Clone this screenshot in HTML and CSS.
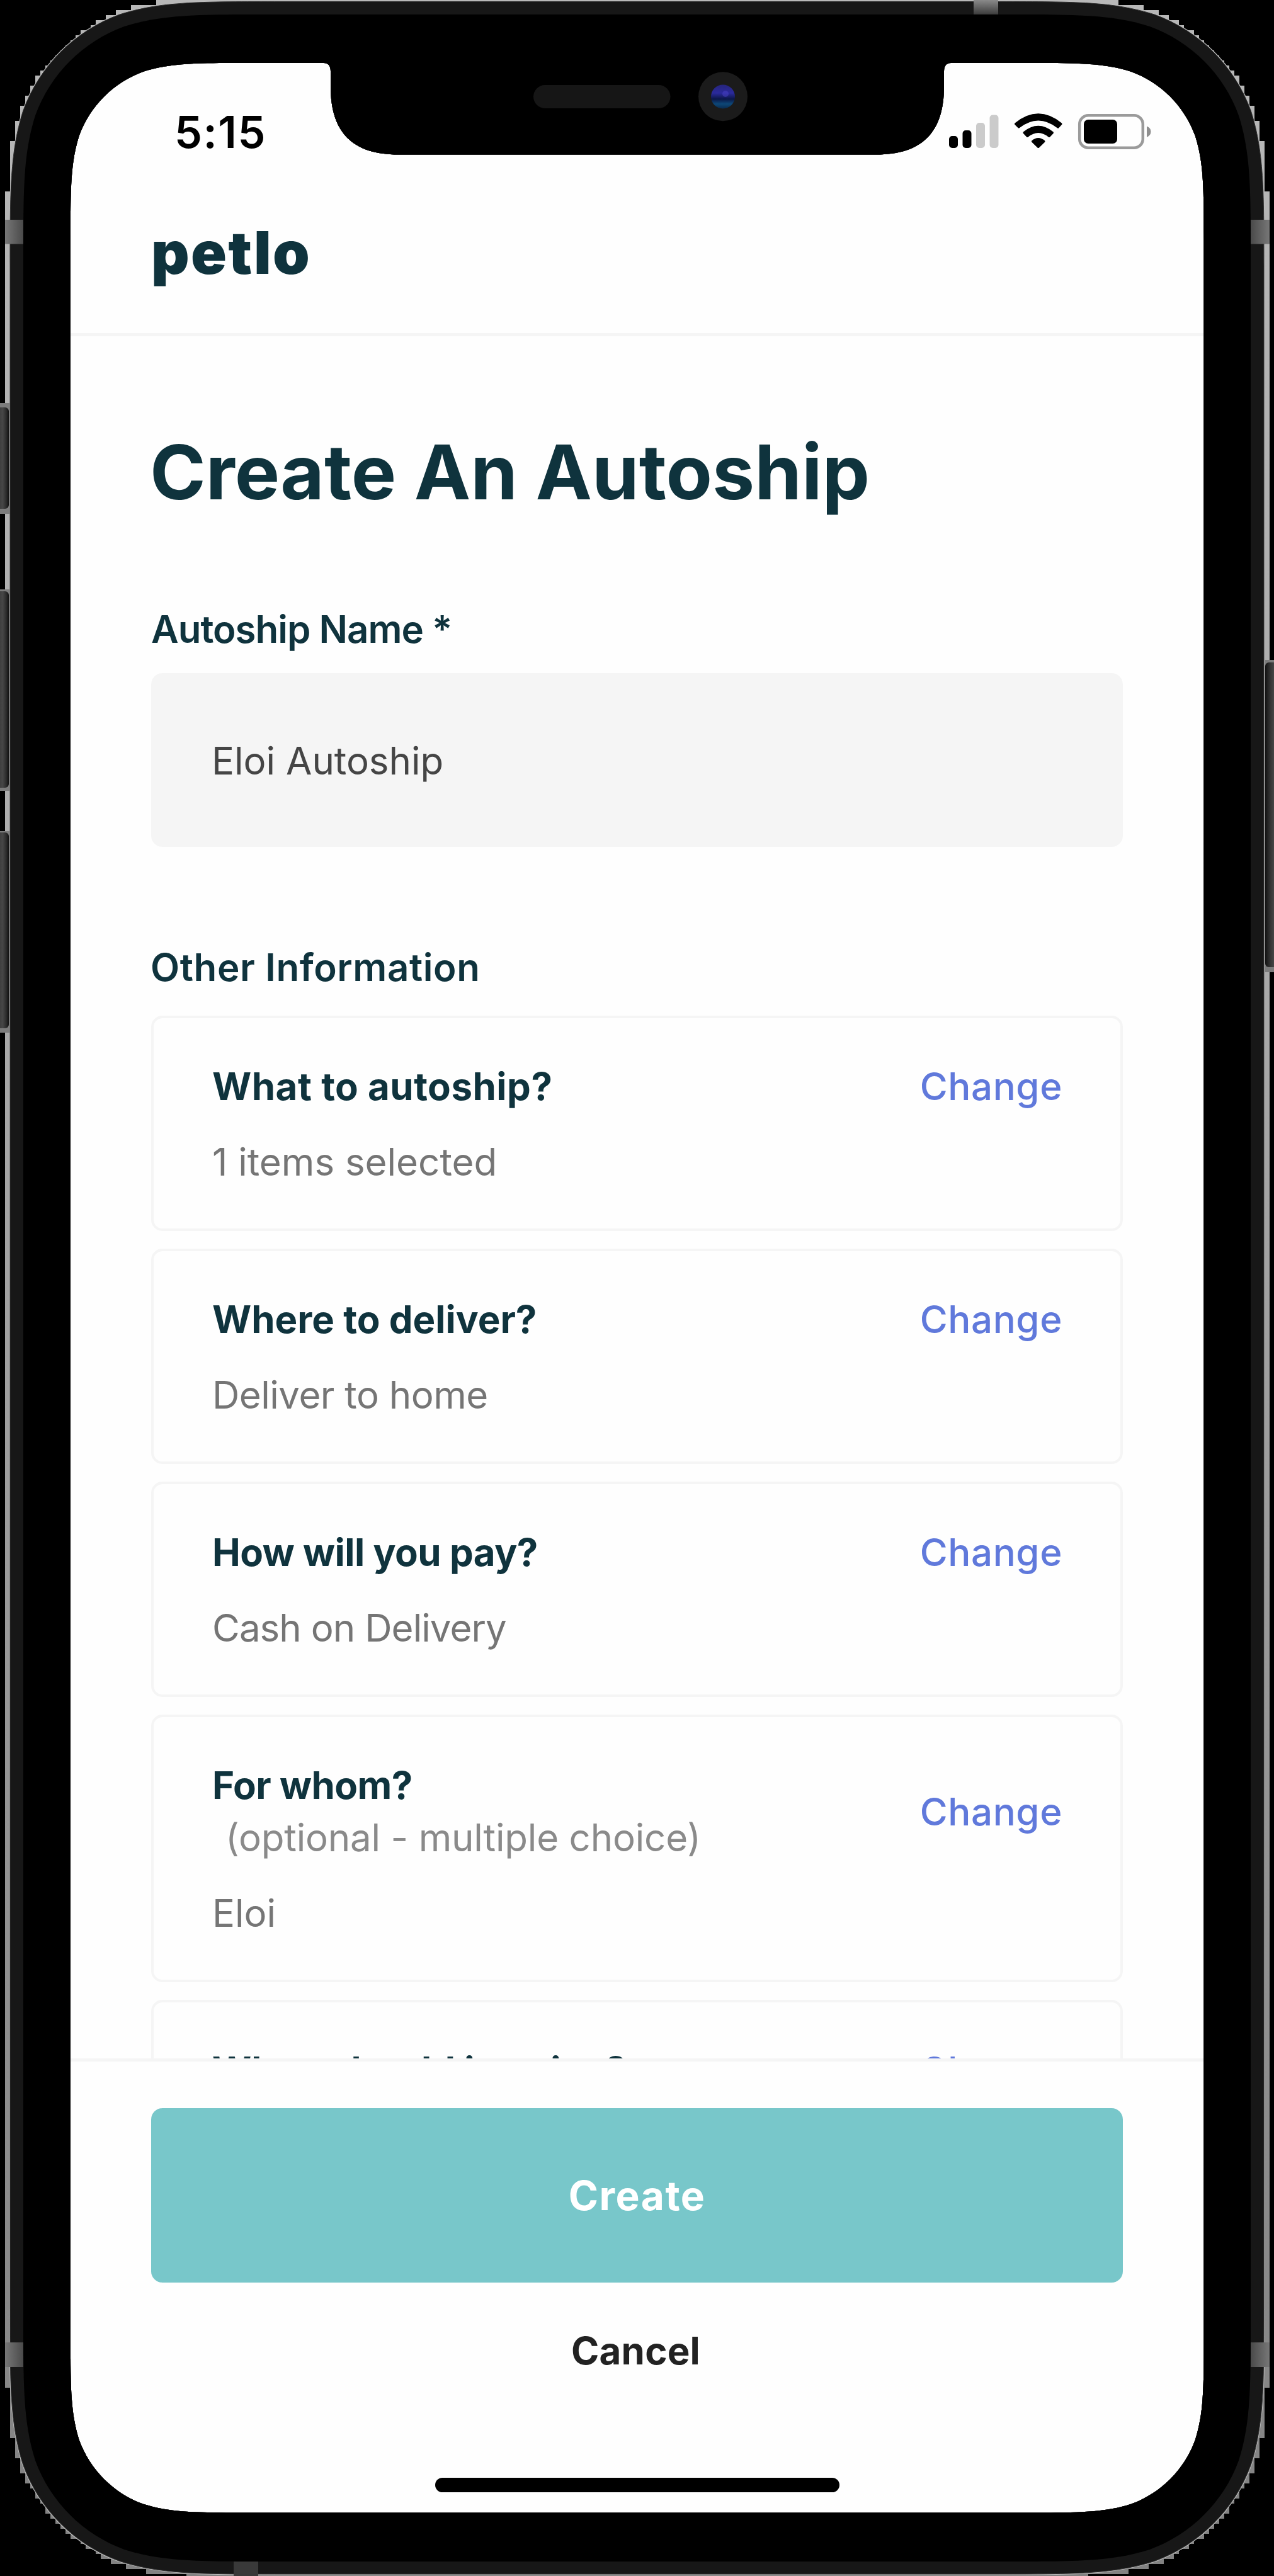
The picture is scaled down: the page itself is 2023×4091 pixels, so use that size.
FILE: index.html
```html
<!DOCTYPE html>
<html lang="en">
<head>
<meta charset="utf-8">
<title>Create An Autoship</title>
<link rel="stylesheet" href="styles.css">
</head>
<body>
<div class="phone">
  <div class="screen">
    <header class="header">
      <div class="status">
        <span class="time">5:15</span>
        <svg class="status-icons" width="322" height="58" viewBox="0 0 322 58">
          <rect x="0" y="36" width="14" height="19" rx="5"/>
          <rect x="21.5" y="27" width="14" height="28" rx="5"/>
          <g fill="#cbcbcb">
            <rect x="43" y="15" width="14" height="40" rx="5"/>
            <rect x="64.5" y="2.500" width="14" height="52.500" rx="5"/>
          </g>
          <path d="M104.500 15.500Q141.700-15 179 15.500Q180 17 179 18L174 23.500Q172.500 24 171.500 23Q141.700 0 112 23Q110.500 24 109.500 23L104.500 18Q103.500 16.500 104.500 15.500Z"/>
          <path d="M117.800 29.500Q141.700 10 165.600 29.500Q166.500 31 165.500 32L160.300 37.500Q159 38.500 157.700 37.500Q141.700 24.500 125.700 37.500Q124.400 38.500 123.200 37.500L118 32Q117 31 117.800 29.500Z"/>
          <path d="M131.200 43.500Q141.700 34.500 152.200 43.500Q153 44.800 152 45.800L143 54.500Q141.700 55.500 140.400 54.500L131.400 45.800Q130.400 44.800 131.200 43.500Z"/>
          <rect x="207.200" y="3.200" width="100.600" height="51.600" rx="14" fill="none" stroke="#9b9b9b" stroke-width="4.500"/>
          <rect x="214" y="10" width="53" height="38" rx="7"/>
          <path d="M314 20.500Q320.500 23 320.500 29T314 38Z" fill="#8f8f8f"/>
        </svg>
      </div>
      <div class="brand">petlo</div>
    </header>

    <main class="content">
      <h1 class="title">Create An Autoship</h1>
      <label class="label label-name" for="name">Autoship Name *</label>
      <input class="input" id="name" type="text" value="Eloi Autoship">
      <h2 class="label label-info">Other Information</h2>
      <div class="cards">
        <section class="card">
          <div class="card-head"><h3 class="question">What to autoship?</h3><a class="change">Change</a></div>
          <p class="answer">1 items selected</p>
        </section>
        <section class="card">
          <div class="card-head"><h3 class="question question-plain">Where to deliver?</h3><a class="change">Change</a></div>
          <p class="answer answer-snug">Deliver to home</p>
        </section>
        <section class="card">
          <div class="card-head"><h3 class="question question-tight">How will you pay?</h3><a class="change">Change</a></div>
          <p class="answer answer-tight">Cash on Delivery</p>
        </section>
        <section class="card">
          <div class="card-head">
            <h3 class="question question-tight">For whom?<span class="hint">(optional - multiple choice)</span></h3>
            <a class="change">Change</a>
          </div>
          <p class="answer">Eloi</p>
        </section>
        <section class="card">
          <div class="card-head"><h3 class="question question-plain">When should it arrive?</h3><a class="change">Change</a></div>
        </section>
      </div>
    </main>

    <footer class="footer">
      <button class="create" type="button">Create</button>
      <button class="cancel" type="button">Cancel</button>
      <div class="home-indicator"></div>
    </footer>
  </div>

  <svg class="frame" width="2023" height="4091" viewBox="0 0 2023 4091" aria-hidden="true">
    <defs>
      <linearGradient id="steel" gradientUnits="userSpaceOnUse" x1="0" y1="0" x2="0" y2="4091">
        <stop offset="0" stop-color="#b8b8b8"/><stop offset=".35" stop-color="#ababab"/><stop offset="1" stop-color="#828282"/>
      </linearGradient>
      <linearGradient id="key-left"><stop offset="0" stop-color="#323232"/><stop offset=".5" stop-color="#474747"/><stop offset=".8" stop-color="#2c2c2c"/><stop offset="1" stop-color="#111"/></linearGradient>
      <linearGradient id="key-right"><stop offset="0" stop-color="#111"/><stop offset=".3" stop-color="#2c2c2c"/><stop offset=".7" stop-color="#474747"/><stop offset="1" stop-color="#323232"/></linearGradient>
      <linearGradient id="band"><stop offset="0" stop-color="#777"/><stop offset="1" stop-color="#4a4a4a"/></linearGradient>
      <linearGradient id="band-right"><stop offset="0" stop-color="#4a4a4a"/><stop offset="1" stop-color="#777"/></linearGradient>
      <linearGradient id="band-top" x2="0" y2="1"><stop offset="0" stop-color="#8a8a8a"/><stop offset="1" stop-color="#3c3c3c"/></linearGradient>
      <linearGradient id="lens" x2="0" y2="1"><stop offset="0" stop-color="#26257c"/><stop offset=".35" stop-color="#2b2a9c"/><stop offset=".6" stop-color="#0b1748"/><stop offset=".8" stop-color="#0d4777"/><stop offset="1" stop-color="#0a2c50"/></linearGradient>
      <!-- everything but the display opening -->
      <clipPath id="bezel">
        <path clip-rule="evenodd" d="M0 0H2023V4091H0Z M391.800 100H514Q525 100 525 114V137.500c0 73 35 108 108 108H1391c73 0 108-35 108-108V114Q1499 100 1510 100H1631.700c80.600 0 120.800 0 164.200 13.700c47.300 17.200 84.600 54.500 101.900 101.900c13.700 43.400 13.700 83.600 13.700 164.200V3710.700c0 80.600 0 120.800-13.700 164.200c-17.200 47.300-54.500 84.600-101.900 101.900c-43.400 13.700-83.600 13.700-164.200 13.700H391.800c-80.600 0-120.800 0-164.200-13.700c-47.300-17.200-84.600-54.500-101.900-101.900c-13.700-43.400-13.700-83.600-13.700-164.200V379.800c0-80.600 0-120.800 13.700-164.200c17.200-47.300 54.500-84.600 101.900-101.900c43.400-13.700 83.600-13.700 164.200-13.700Z"/>
      </clipPath>
      <path id="edge-top" d="M1012 0H248V8H208V16H184V24H168V32H152V40H144V48H128V56H120V64H112V72H104V80H96V88H88V96H80V104H72V112H64V120H56V136H48V152H40V168H32V192H24V224H16V304H8V2046H1012Z"/>
      <path id="edge-bottom" d="M1012 4091H296V4088H232V4080H200V4072H176V4064H160V4056H152V4048H136V4040H128V4032H112V4024H104V4016H96V4008H88V4000H80V3992H72V3976H64V3968H56V3952H48V3944H40V3928H32V3904H24V3872H16V3792H8V2045H1012Z"/>
      <path id="body" d="M436.400 2.500H1586.600c121.100 0 181.600 0 246.700 20.600c71.100 25.900 127.200 81.900 153.100 153.100c20.600 65.100 20.600 125.700 20.600 246.700V3667.600c0 121.100 0 181.600-20.600 246.700c-25.900 71.100-81.900 127.200-153.100 153.100c-65.100 20.600-125.700 20.600-246.700 20.600H436.400c-121.100 0-181.600 0-246.700-20.600c-71.100-25.900-127.200-81.900-153.100-153.100c-20.600-65.100-20.600-125.700-20.600-246.700V422.900c0-121.100 0-181.600 20.600-246.700c25.900-71.100 81.900-127.200 153.100-153.100c65.100-20.600 125.700-20.600 246.700-20.600Z"/>
    </defs>
    <g clip-path="url(#bezel)">
      <rect width="2023" height="4091"/>
      <g fill="url(#steel)">
        <use href="#edge-top"/><use href="#edge-top" transform="matrix(-1 0 0 1 2024 0)"/>
        <use href="#edge-bottom"/><use href="#edge-bottom" transform="matrix(-1 0 0 1 2024 0)"/>
      </g>
      <use href="#body" fill="#171717" stroke="#bcbcbc" stroke-width="3"/>
      <use href="#body" fill="#171717" stroke="#333" stroke-width="1"/>
      <path d="M425.300 23H1597.700c111.800 0 167.700 0 227.900 19c65.700 23.900 117.500 75.700 141.400 141.400c19 60.200 19 116.100 19 227.900V3679.700c0 111.800 0 167.700-19 227.900c-23.900 65.700-75.700 117.500-141.400 141.400c-60.200 19-116.100 19-227.900 19H425.300c-111.800 0-167.700 0-227.900-19c-65.700-23.900-117.500-75.700-141.400-141.400c-19-60.200-19-116.100-19-227.900V411.300c0-111.800 0-167.700 19-227.900c23.900-65.700 75.700-117.500 141.400-141.400c60.200-19 116.100-19 227.900-19Z"/>
      <g fill="url(#band)">
        <rect x="8" y="349" width="29" height="38.500"/><rect x="8" y="3720" width="29" height="39"/>
      </g>
      <g fill="url(#band-right)">
        <rect x="1986" y="349" width="30" height="38.500"/><rect x="1986" y="3720" width="30" height="39"/>
      </g>
      <rect x="1546" y="0" width="39" height="23" fill="url(#band-top)"/>
      <rect x="371" y="4068" width="39" height="23" fill="#393939"/>
      <g fill="#7c7c7c">
        <rect x="0" y="640" width="15" height="176"/><rect x="0" y="936" width="15" height="320"/><rect x="0" y="1320" width="15" height="320"/>
        <rect x="2009" y="1048" width="14" height="496"/>
      </g>
      <g fill="url(#key-left)">
        <rect x="-6" y="647" width="20" height="161" rx="6"/><rect x="-6" y="939" width="20" height="312" rx="6"/><rect x="-6" y="1322" width="20" height="311" rx="6"/>
      </g>
      <rect x="2009" y="1052" width="20" height="484" rx="6" fill="url(#key-right)"/>
      <rect x="847" y="135" width="217.500" height="37" rx="18.500" fill="#161616"/>
      <circle cx="1148" cy="153.300" r="39" fill="#1b1b1b"/>
      <circle cx="1148" cy="153.500" r="19" fill="url(#lens)"/>
      <circle cx="1152" cy="149" r="5" fill="#4a42c8" opacity=".5"/>
    </g>
  </svg>
</div>
</body>
</html>
```
FILE: styles.css
```css
* {
  box-sizing: border-box;
}

body {
  margin: 0;
  background: #000;
  font-family: Inter, "Liberation Sans", sans-serif;
}

h1, h2, h3, p {
  margin: 0;
}

.phone {
  position: relative;
  width: 2023px;
  height: 4091px;
  padding: 100px 111px 100px 112px;
  overflow: hidden;
}

/* the hardware lies over the display */
.frame {
  position: absolute;
  inset: 0;
  pointer-events: none;
}

.screen {
  display: flex;
  flex-direction: column;
  height: 3891px;
  background: #fefefe;
}

.header {
  flex: none;
  height: 434px;
  border-bottom: 5px solid #f5f5f5;
}

.status {
  display: flex;
  justify-content: space-between;
  align-items: flex-start;
  height: 200px;
  padding: 68px 83px 0 165px;
}

.time {
  font-size: 70px;
  font-weight: 600;
  line-height: 84px;
  letter-spacing: 1.5px;
  color: #000;
}

.status-icons {
  margin-top: 12px;
}

.brand {
  padding: 44px 0 0 128px;
  font-size: 94px;
  font-weight: 900;
  line-height: 114px;
  letter-spacing: 2.4px;
  color: #0f333d;
}

.content {
  flex: 1;
  min-height: 0;
  overflow: hidden;
  padding: 143px 129px 0 128px;
}

.title {
  margin-left: -2px;
  font-size: 120px;
  font-weight: 700;
  line-height: 145px;
  color: #0f333d;
}

.label {
  display: block;
  font-size: 60px;
  font-weight: 600;
  line-height: 73px;
  color: #0f333d;
}

.label-name {
  margin-top: 141px;
  letter-spacing: -1px;
}

.label-info {
  margin: 155px 0 0 -1px;
  letter-spacing: 0.6px;
}

.input {
  display: block;
  width: 100%;
  height: 276px;
  margin-top: 33px;
  padding: 2px 96px 0;
  border: 0;
  border-radius: 18px;
  background: #f5f5f5;
  font: 400 60px/73px Inter, "Liberation Sans", sans-serif;
  color: #454545;
}

.cards {
  display: flex;
  flex-direction: column;
  gap: 28px;
  margin-top: 40px;
}

.card {
  padding: 67px 92px 64px 93px;
  border: 4px solid #f5f5f5;
  border-radius: 18px;
}

.card-head {
  display: flex;
  justify-content: space-between;
  align-items: center;
}

.question,
.answer,
.change {
  font-size: 60px;
  line-height: 83px;
}

.question {
  font-weight: 700;
  letter-spacing: 0.5px;
  color: #0f333d;
}

.question-tight {
  letter-spacing: -0.5px;
}

.question-plain {
  letter-spacing: 0;
}

.hint {
  display: block;
  padding-left: 21px;
  font-weight: 400;
  letter-spacing: -0.2px;
  color: #8a8a8a;
}

.change {
  font-weight: 500;
  letter-spacing: 0.6px;
  color: #6079db;
}

.answer {
  margin-top: 37px;
  letter-spacing: 0;
  color: #757575;
}

.answer-snug {
  letter-spacing: -0.5px;
}

.answer-tight {
  letter-spacing: -0.95px;
}

.footer {
  flex: none;
  display: flex;
  flex-direction: column;
  align-items: center;
  height: 722px;
  padding: 74px 129px 0 128px;
  border-top: 5px solid #f5f5f5;
}

.create,
.cancel {
  padding: 0;
  border: 0;
  font-family: inherit;
  font-weight: 700;
}

.create {
  width: 100%;
  height: 277px;
  border-radius: 18px;
  background: #78c7ca;
  font-size: 64px;
  letter-spacing: 1.5px;
  color: #fff;
}

.cancel {
  margin: 72px 4px 0 0;
  background: none;
  font-size: 60px;
  line-height: 73px;
  letter-spacing: 0.2px;
  color: #222;
}

.home-indicator {
  width: 642px;
  height: 23px;
  margin-top: 165px;
  border-radius: 12px;
  background: #000;
}
```
